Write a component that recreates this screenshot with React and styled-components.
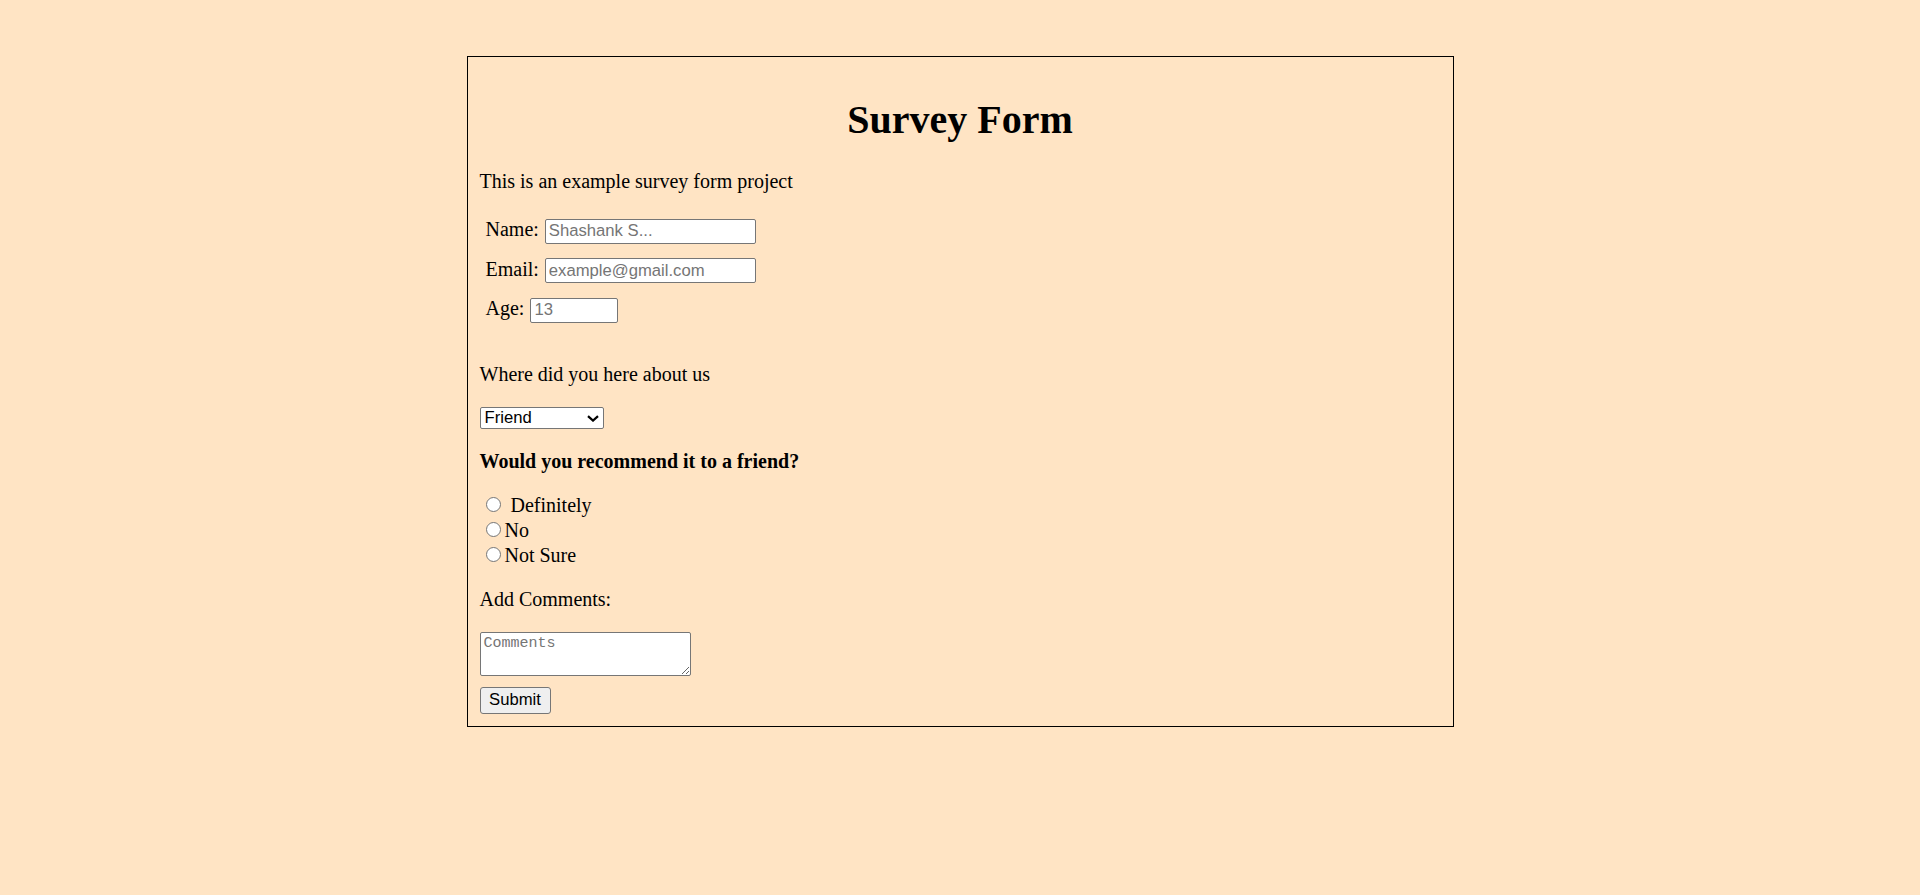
import React from "react";
import styled, { createGlobalStyle } from "styled-components";

const GlobalStyle = createGlobalStyle`
  html, body {
    margin: 0;
    padding: 0;
    background: #ffe4c4;
  }
  body {
    font-family: "Liberation Serif", "Times New Roman", serif;
    color: #000;
  }
`;

const Page = styled.div`
  padding-top: 56px;
`;

const FormBox = styled.form`
  box-sizing: border-box;
  width: 987px;
  margin: 0 auto;
  border: 1px solid #000;
  padding: 12px;
  font-size: 20px;
  line-height: 23px;
`;

const Title = styled.h1`
  margin: 28px 0 0;
  font-size: 40px;
  line-height: 46px;
  font-weight: bold;
  text-align: center;
`;

const Text = styled.p`
  margin: ${(p) => p.$top}px 0 0;
  font-weight: ${(p) => (p.$bold ? "bold" : "normal")};
`;

const Fields = styled.div`
  margin-top: 25px;
  display: flex;
  flex-direction: column;
  gap: 14px;
`;

const FieldRow = styled.div`
  display: flex;
  align-items: baseline;
  gap: 6px;
  padding-left: 6px;
`;

const Label = styled.label``;

const TextInput = styled.input`
  box-sizing: border-box;
  width: ${(p) => p.$w}px;
  height: 25px;
  border: 1px solid #767676;
  border-radius: 2px;
  padding: 0 3px;
  background: #fff;
  font-family: "Liberation Sans", Arial, sans-serif;
  font-size: 16.67px;
  color: #000;
  outline: none;
  &::placeholder {
    color: #757575;
  }
`;

const SelectWrap = styled.div`
  position: relative;
  margin-top: 21px;
  width: 124px;
  height: 22px;
`;

const Select = styled.select`
  appearance: none;
  box-sizing: border-box;
  width: 124px;
  height: 22px;
  margin: 0;
  border: 1px solid #767676;
  border-radius: 2px;
  padding: 0 0 0 4px;
  background: #fff;
  font-family: "Liberation Sans", Arial, sans-serif;
  font-size: 16.67px;
  color: #000;
  outline: none;
  display: block;
`;

const Chevron = styled.svg`
  position: absolute;
  left: 107px;
  top: 8px;
  width: 12px;
  height: 7px;
  pointer-events: none;
`;

const Options = styled.div`
  margin-top: 21px;
  display: flex;
  flex-direction: column;
`;

const OptionRow = styled.label`
  display: flex;
  align-items: flex-start;
  height: 25px;
`;

const Radio = styled.input`
  appearance: none;
  box-sizing: border-box;
  width: 15px;
  height: 15px;
  margin: 3px 4px 0 6px;
  border: 1px solid #767676;
  border-radius: 50%;
  background: #fff;
  flex: none;
`;

const OptionText = styled.span`
  margin-left: ${(p) => (p.$space ? 6 : 0)}px;
`;

const Comments = styled.textarea`
  display: block;
  box-sizing: border-box;
  margin-top: 21px;
  width: 211px;
  height: 44px;
  border: 1px solid #767676;
  border-radius: 2px;
  padding: 2px 3px;
  background: #fff;
  font-family: "Liberation Mono", "DejaVu Sans Mono", monospace;
  font-size: 15px;
  outline: none;
  &::placeholder {
    color: #757575;
  }
`;

const SubmitButton = styled.button`
  display: block;
  box-sizing: border-box;
  margin-top: 11px;
  width: 71px;
  height: 27px;
  padding: 0;
  border: 1px solid #767676;
  border-radius: 3px;
  background: #efefef;
  font-family: "Liberation Sans", Arial, sans-serif;
  font-size: 16.67px;
  color: #000;
`;

export default function App() {
  return (
    <>
      <GlobalStyle />
      <Page>
        <FormBox onSubmit={(e) => e.preventDefault()}>
          <Title>Survey Form</Title>
          <Text $top={27}>This is an example survey form project</Text>
          <Fields>
            <FieldRow>
              <Label htmlFor="name">Name:</Label>
              <TextInput id="name" $w={211} placeholder="Shashank S..." />
            </FieldRow>
            <FieldRow>
              <Label htmlFor="email">Email:</Label>
              <TextInput id="email" $w={211} placeholder="example@gmail.com" />
            </FieldRow>
            <FieldRow>
              <Label htmlFor="age">Age:</Label>
              <TextInput id="age" $w={88} placeholder="13" />
            </FieldRow>
          </Fields>
          <Text $top={40}>Where did you here about us</Text>
          <SelectWrap>
            <Select defaultValue="friend">
              <option value="friend">Friend</option>
              <option value="social">Social Media</option>
              <option value="other">Other</option>
            </Select>
            <Chevron viewBox="0 0 12 7">
              <path d="M1 1.2 L6 5.6 L11 1.2" fill="none" stroke="#000" strokeWidth="2.2" />
            </Chevron>
          </SelectWrap>
          <Text $top={21} $bold>Would you recommend it to a friend?</Text>
          <Options>
            <OptionRow>
              <Radio type="radio" name="rec" />
              <OptionText $space>Definitely</OptionText>
            </OptionRow>
            <OptionRow>
              <Radio type="radio" name="rec" />
              <OptionText>No</OptionText>
            </OptionRow>
            <OptionRow>
              <Radio type="radio" name="rec" />
              <OptionText>Not Sure</OptionText>
            </OptionRow>
          </Options>
          <Text $top={19}>Add Comments:</Text>
          <Comments placeholder="Comments" />
          <SubmitButton type="submit">Submit</SubmitButton>
        </FormBox>
      </Page>
    </>
  );
}
